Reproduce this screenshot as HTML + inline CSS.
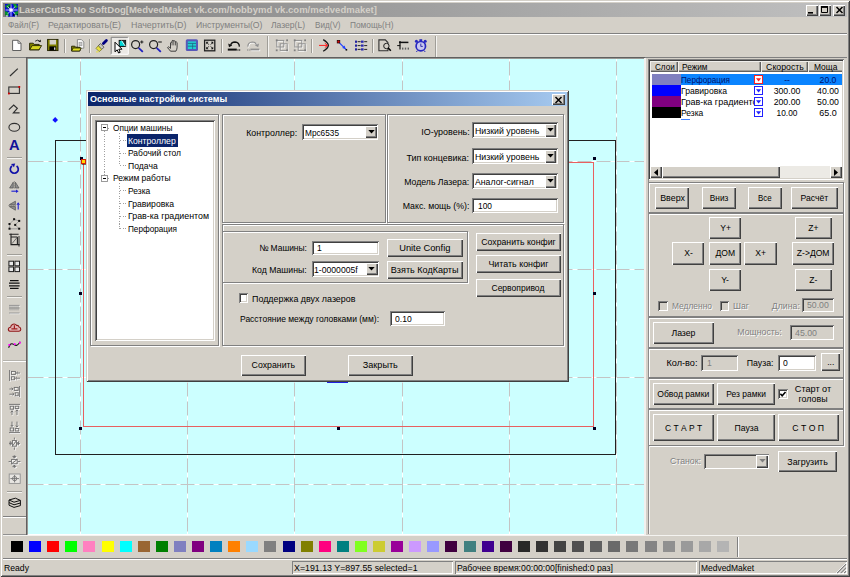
<!DOCTYPE html>
<html lang="ru"><head><meta charset="utf-8"><title>LaserCut53</title>
<style>
html,body{margin:0;padding:0;background:#d4d0c8;overflow:hidden;}
body{width:850px;height:577px;overflow:hidden;}
#app{position:relative;width:850px;height:577px;overflow:hidden;background:#d4d0c8;font-family:"Liberation Sans",sans-serif;font-size:9px;color:#000;}
#app div{position:absolute;box-sizing:border-box;}
.t{line-height:12px;height:12px;white-space:nowrap;transform-origin:0 50%;}
.t.r{transform-origin:100% 50%;}
.t.c{width:200px;text-align:center;transform-origin:50% 50%;}
.s{display:inline-block;transform-origin:50% 50%;line-height:12px;}
.ed .s{transform-origin:0 50%;}
.g{color:#808080;text-shadow:0.8px 0.8px 0 #fff;}
.b{font-weight:bold;}
.btn{background:#d4d0c8;box-shadow:inset 1px 1px 0 #fff,inset -1px -1px 0 #404040,inset -2px -2px 0 #808080;display:flex;align-items:center;justify-content:center;white-space:nowrap;}
.ed{padding-top:0.8px;background:#fff;box-shadow:inset 1px 1px 0 #808080,inset -1px -1px 0 #fff,inset 2px 2px 0 #404040,inset -2px -2px 0 #d4d0c8;display:flex;align-items:center;padding-left:4px;white-space:nowrap;}
.ed.cmb{padding-top:1.8px;padding-left:2.6px;}
.ed.dis{background:#d4d0c8;color:#808080;}
.cbtn{background:#d4d0c8;box-shadow:inset 1px 1px 0 #fff,inset -1px -1px 0 #404040,inset -2px -2px 0 #808080;display:flex;align-items:center;justify-content:center;}
.fr{border:1px solid #808080;box-shadow:inset 1px 1px 0 #fff,1px 1px 0 #fff;}
.sunk{box-shadow:inset 1px 1px 0 #808080,inset -1px -1px 0 #fff,inset 2px 2px 0 #404040,inset -2px -2px 0 #d4d0c8;}
.cb{background:#fff;box-shadow:inset 1px 1px 0 #808080,inset -1px -1px 0 #fff,inset 2px 2px 0 #404040,inset -2px -2px 0 #d4d0c8;}
.cb.dis{background:#d4d0c8;}
.hl{background:#808080;height:1px;}
.wl{background:#fff;height:1px;}
.sw{width:12px;height:11px;top:541px;}
svg{position:absolute;overflow:visible;}
.cbtn svg{position:static;}

</style></head>
<body>
<div id="app">
<div class="" style="left:0px;top:0px;width:850px;height:577px;background:#d4d0c8;box-shadow:inset 1px 1px 0 #d4d0c8,inset -1px -1px 0 #404040,inset 2px 2px 0 #fff,inset -2px -2px 0 #808080;"></div>
<div class="" style="left:3px;top:3px;width:844px;height:14px;background:linear-gradient(90deg,#808080 0%,#c0c0c0 100%);"></div>
<svg style="left:4.5px;top:3.8px" width="13" height="13" viewBox="0 0 13 13"><rect width="13" height="12.6" fill="#0808d8"/><path d="M0 2l4-2h2l-3 5zM8 0h3l2 3l-3 2zM0 7l3 1l1 4h-4zM9 8l4-1v3l-3 2z" fill="#089030"/><path d="M0 12.6v-2l2 2zM13 12.600v-2.500l-2.500 2.500zM6 2l-2 2l1-3zM8 10l2 1l-2 1z" fill="#000"/><path d="M6 0.400v12M0.600 6h12M2.400 2.400l8 7.600M10.400 2.400l-8 7.600" stroke="#e8e8ff" stroke-width="0.8"/><circle cx="6" cy="6" r="1.800" fill="#fff"/><rect x="0.400" y="11.400" width="2.400" height="1.200" fill="#fff"/><rect x="10" y="11.400" width="2.600" height="1.200" fill="#fff"/></svg>
<div class="t  b" style="left:18.6px;top:4px;transform:scaleX(1.057);color:#d4d0c8;">LaserCut53 No SoftDog[MedvedMaket vk.com/hobbymd vk.com/medvedmaket]</div>
<div class="btn " style="left:806px;top:5px;width:11.5px;height:10.5px;"><svg width="6" height="2" viewBox="0 0 6 2" style="position:static;margin:5px 2px 0 0"><rect width="5" height="1.6" fill="#000"/></svg></div>
<div class="btn " style="left:818.5px;top:5px;width:12px;height:10.5px;"><svg width="7" height="7" viewBox="0 0 7 7" style="position:static;margin:0 1px 1px 0"><path d="M0.500 1v5.500h6V1z" fill="none" stroke="#000" stroke-width="1"/><rect x="0" y="0" width="7" height="1.800" fill="#000"/></svg></div>
<div class="btn " style="left:833px;top:5px;width:12px;height:10.5px;"><svg width="7" height="6" viewBox="0 0 7 6" style="position:static"><path d="M0.5 0l6 6M6.5 0l-6 6" stroke="#000" stroke-width="1.5" fill="none"/></svg></div>
<div class="t " style="left:8px;top:19.2px;transform:scaleX(0.922);color:#808080;">Файл(F)</div>
<div class="t " style="left:48px;top:19.2px;transform:scaleX(0.984);color:#808080;">Редактировать(E)</div>
<div class="t " style="left:130.5px;top:19.2px;transform:scaleX(0.986);color:#808080;">Начертить(D)</div>
<div class="t " style="left:195.5px;top:19.2px;transform:scaleX(0.962);color:#808080;">Инструменты(O)</div>
<div class="t " style="left:271px;top:19.2px;transform:scaleX(0.948);color:#808080;">Лазер(L)</div>
<div class="t " style="left:314.5px;top:19.2px;transform:scaleX(0.902);color:#808080;">Вид(V)</div>
<div class="t " style="left:349.5px;top:19.2px;transform:scaleX(0.921);color:#808080;">Помощь(H)</div>
<div class="" style="left:3px;top:33px;width:844px;height:1px;background:#808080;"></div>
<div class="" style="left:3px;top:34px;width:844px;height:1px;background:#fff;"></div>
<div class="" style="left:3px;top:57px;width:844px;height:1px;background:#808080;"></div>
<div class="" style="left:266.5px;top:36px;width:1px;height:21px;background:#a09e98;"></div>
<div class="" style="left:267.5px;top:36px;width:1px;height:21px;background:#f4f3f0;"></div>
<div class="" style="left:435px;top:36px;width:1px;height:21px;background:#a09e98;"></div>
<div class="" style="left:436px;top:36px;width:1px;height:21px;background:#f4f3f0;"></div>
<div class="" style="left:63.5px;top:39px;width:1px;height:14px;background:#9c9a94;"></div>
<div class="" style="left:64.5px;top:39px;width:1px;height:14px;background:#f4f3f0;"></div>
<div class="" style="left:88.5px;top:39px;width:1px;height:14px;background:#9c9a94;"></div>
<div class="" style="left:89.5px;top:39px;width:1px;height:14px;background:#f4f3f0;"></div>
<div class="" style="left:220.5px;top:39px;width:1px;height:14px;background:#9c9a94;"></div>
<div class="" style="left:221.5px;top:39px;width:1px;height:14px;background:#f4f3f0;"></div>
<div class="" style="left:311px;top:39px;width:1px;height:14px;background:#9c9a94;"></div>
<div class="" style="left:312px;top:39px;width:1px;height:14px;background:#f4f3f0;"></div>
<div class="" style="left:372px;top:39px;width:1px;height:14px;background:#9c9a94;"></div>
<div class="" style="left:373px;top:39px;width:1px;height:14px;background:#f4f3f0;"></div>
<svg style="left:0;top:0;pointer-events:none" width="850" height="577" viewBox="0 0 850 577"><path d="M12.6 40.3h5.4l3 3v7.2h-8.4z" fill="#fff" stroke="#606060" stroke-width="1"/><path d="M18 40.3v3h3" fill="none" stroke="#606060" stroke-width="0.9"/><path d="M29.6 43.2h3.6l1 1.2h5v5.4h-9.6z" fill="#808000" stroke="#202000" stroke-width="0.9"/><path d="M29.6 49.8l2.6-4.2h9.4l-2.6 4.2z" fill="#d6d620" stroke="#202000" stroke-width="0.9"/><path d="M35.2 41.2q2.6-2.4 5 .4" fill="none" stroke="#202020" stroke-width="0.9"/><path d="M40.8 39.4v2.6h-2.6z" fill="#202020"/><rect x="47.6" y="39.4" width="10.4" height="11.2" fill="#808000" stroke="#202000" stroke-width="0.9"/><rect x="49.6" y="39.9" width="6.4" height="4.6" fill="#d4d0c8"/><rect x="49.4" y="46.4" width="6.8" height="4.2" fill="#000"/><rect x="54" y="47.4" width="1.4" height="2.4" fill="#d4d0c8"/><path d="M77.4 39.6h4l2.4 2.4v6.2h-6.4z" fill="#fff" stroke="#808080" stroke-width="0.9"/><rect x="79" y="42.2" width="3" height="3.6" fill="#c8c8c8" stroke="#909090" stroke-width="0.6"/><path d="M71.6 46.2h3.2l1 1h4.2v3.8h-8.4z" fill="#808000" stroke="#202000" stroke-width="0.9"/><path d="M71.6 51l1.6-3h8l-1.6 3z" fill="#dede20" stroke="#202000" stroke-width="0.8"/><path d="M103.4 43.6l3-3" stroke="#000080" stroke-width="2.8" stroke-linecap="round"/><path d="M100.4 43.6l3.6 3.6-2.2 2.2-3.6-3.6z" fill="#c8c8c0" stroke="#404040" stroke-width="0.8"/><path d="M98.2 45.8l3.6 3.6-2.6 2.2-3.2-3.2z" fill="#e8e040" stroke="#707020" stroke-width="0.7"/><rect x="96" y="51.4" width="2.6" height="1" fill="#e8e040"/><rect x="111.2" y="37.3" width="17.1" height="17" fill="#ebe9e5"/><path d="M111.2 54.3v-17h17.1" fill="none" stroke="#808080" stroke-width="1"/><path d="M128.3 37.3v17h-17.1" fill="none" stroke="#fff" stroke-width="1"/><rect x="119.2" y="40.4" width="6.4" height="6" fill="#00d8d8" stroke="#101010" stroke-width="1"/><path d="M121.6 40.6l3.8 5.6" stroke="#fff" stroke-width="0.9"/><path d="M122.4 40.6h3v5z" fill="#303030"/><path d="M115 42.2v9.600l2.200-2 1.400 3.200 1.600-0.700-1.400-3.100h3.200z" fill="#fff" stroke="#000" stroke-width="1"/><circle cx="135.6" cy="44.6" r="4" fill="none" stroke="#202020" stroke-width="1.2"/><path d="M138.6 47.8l4.2 4" stroke="#2020c0" stroke-width="1.8"/><circle cx="153.6" cy="44.6" r="4" fill="none" stroke="#202020" stroke-width="1.2"/><path d="M156.6 47.8l4.2 4" stroke="#2020c0" stroke-width="1.8"/><path d="M140.2 42h3.2M141.8 40.4v3.2" stroke="#202020" stroke-width="1.1"/><path d="M158.2 42h3.6" stroke="#202020" stroke-width="1.1"/><path d="M170.5 51.2q-1.8-2.4-3-3.6q0.6-1.6 2.2 0l0.8 0.8v-5.6q0.9-1.2 1.6 0v-2q0.9-1.2 1.7 0v0.6q0.9-1.2 1.7 0v1q0.9-1 1.6 0.2v4.6q0 2-1.2 4z" fill="#d4d0c8" stroke="#303030" stroke-width="0.9" stroke-linejoin="round"/><path d="M172.1 42.8v2.6M173.8 41.4v4M175.5 42.4v3" stroke="#303030" stroke-width="0.7"/><rect x="185.8" y="39.2" width="12.2" height="11.8" rx="1.6" fill="#5858b8"/><rect x="187.8" y="41.4" width="8.2" height="7.6" fill="#20d0d0"/><path d="M187.8 43.4h8.2M187.8 46.2h8.2" stroke="#206080" stroke-width="0.8"/><path d="M192.6 43.4v5.6" stroke="#206080" stroke-width="0.7"/><rect x="204.6" y="40.2" width="10.2" height="10.6" fill="#d4d0c8" stroke="#202020" stroke-width="1.3"/><path d="M206.2 41.8h2.4l-2.4 2.4zM213.2 41.8v2.4l-2.4-2.4zM206.2 49.2v-2.4l2.4 2.4zM213.2 49.2h-2.4l2.4-2.4z" fill="#101010"/><path d="M207 42.8l5.4 5.4M212.4 42.8l-5.4 5.4" stroke="#101010" stroke-width="0.8"/><rect x="208.6" y="44.4" width="2.2" height="2.2" fill="#d4d0c8"/><path d="M230.6 45.6q0.6-3.6 4.4-3.6q4.2 0.2 4.4 4.6" fill="none" stroke="#101010" stroke-width="1.3"/><path d="M228.2 43.4l0.8 3.8l3.2-1.6z" fill="#101010"/><rect x="227.8" y="48.6" width="9" height="2" fill="#101010"/><rect x="237.4" y="49.4" width="1.1" height="1.2" fill="#101010"/><rect x="239.1" y="49.4" width="1.1" height="1.2" fill="#101010"/><g transform="translate(0.8,0.8)"><path d="M256.6 45.600q-0.600-3.600-4.400-3.600q-4.200 0.200-4.400 4.600" fill="none" stroke="#fff" stroke-width="1.1"/><rect x="250.400" y="48.600" width="9" height="1.800" fill="#fff"/></g><path d="M256.600 45.600q-0.600-3.600-4.400-3.600q-4.200 0.200-4.400 4.600" fill="none" stroke="#909090" stroke-width="1.2"/><path d="M259 43.400l-0.800 3.800l-3.200-1.600z" fill="#909090"/><rect x="250.400" y="48.600" width="9" height="1.800" fill="#909090"/><rect x="247" y="49.400" width="1.100" height="1.200" fill="#909090"/><rect x="248.700" y="49.400" width="1.100" height="1.200" fill="#909090"/><g transform="translate(275.8,39.4)"><g transform="translate(0.8,0.8)" stroke="#fff" fill="none" stroke-width="0.9"><rect x="1" y="1" width="7" height="6.6"/><rect x="4.4" y="4.4" width="7" height="6.6"/></g><g stroke="#909090" fill="none" stroke-width="1"><rect x="1" y="1" width="7" height="6.6"/><rect x="4.4" y="4.4" width="7" height="6.6"/></g><g fill="#808080"><rect x="0" y="0" width="1.8" height="1.8"/><rect x="10.4" y="0" width="1.8" height="1.8"/><rect x="0" y="10" width="1.8" height="1.8"/><rect x="10.4" y="10" width="1.8" height="1.8"/></g></g><g transform="translate(293.8,39.4)"><g transform="translate(0.8,0.8)" stroke="#fff" fill="none" stroke-width="0.9"><rect x="1" y="1" width="7" height="6.6"/><rect x="4.4" y="4.4" width="7" height="6.6"/></g><g stroke="#909090" fill="none" stroke-width="1"><rect x="1" y="1" width="7" height="6.6"/><rect x="4.4" y="4.4" width="7" height="6.6"/></g><g fill="#808080"><rect x="0" y="0" width="1.8" height="1.8"/><rect x="10.4" y="0" width="1.8" height="1.8"/><rect x="0" y="10" width="1.8" height="1.8"/><rect x="10.4" y="10" width="1.8" height="1.8"/></g></g><path d="M323.2 39.6q5 3 5.2 5.8q-0.2 2.8-5.2 5.8" fill="none" stroke="#181818" stroke-width="1.3"/><path d="M319 45.4h8.4M324.8 43.2l2.8 2.2l-2.8 2.2" fill="none" stroke="#ff2020" stroke-width="1"/><path d="M339.4 42.8l6.6 6.6" stroke="#2040ff" stroke-width="1.2"/><path d="M345.6 49l-3.4-1l2.4-2.4z" fill="#2040ff"/><rect x="337.2" y="40.4" width="2.6" height="2.6" fill="#e00000" stroke="#200000" stroke-width="0.7"/><rect x="345.6" y="49" width="1.6" height="1.6" fill="#101010"/><rect x="355" y="40.6" width="2" height="2.2" fill="#2020a0"/><path d="M357.6 41.7h3M364.2 41.7h3" stroke="#101010" stroke-width="0.9"/><rect x="361" y="40.6" width="2.6" height="2.2" fill="#2828b0"/><rect x="355" y="44.5" width="2" height="2.2" fill="#2020a0"/><path d="M357.6 45.6h3M364.2 45.6h3" stroke="#101010" stroke-width="0.9"/><rect x="361" y="44.5" width="2.6" height="2.2" fill="#2828b0"/><rect x="355" y="48.3" width="2" height="2.2" fill="#2020a0"/><path d="M357.6 49.4h3M364.2 49.4h3" stroke="#101010" stroke-width="0.9"/><rect x="361" y="48.3" width="2.6" height="2.2" fill="#2828b0"/><path d="M378.9 39.9h6.4l2.6 2.6v8.3h-9z" fill="none" stroke="#303030" stroke-width="1.1"/><circle cx="386.4" cy="46" r="2.7" fill="#d4d0c8" stroke="#202020" stroke-width="1"/><path d="M388.2 48l2.6 2.8" stroke="#000" stroke-width="1.6"/><path d="M399 42.4h9.4" stroke="#101010" stroke-width="1.5"/><path d="M400 41v8.6" stroke="#101010" stroke-width="1.2"/><path d="M397.2 45.6h3" stroke="#101010" stroke-width="1"/><rect x="402" y="47.6" width="1.4" height="2" fill="#606060"/><rect x="404.8" y="47.6" width="1.4" height="2" fill="#606060"/><rect x="407.6" y="47.6" width="1.4" height="2" fill="#606060"/><circle cx="420.8" cy="46.2" r="4.7" fill="#c8c8f0" stroke="#2828c0" stroke-width="1.7"/><circle cx="416.4" cy="41.2" r="1.5" fill="#2828c0"/><circle cx="425.2" cy="41.2" r="1.5" fill="#2828c0"/><rect x="419.4" y="39.2" width="2.8" height="1.8" fill="#2828c0"/><path d="M420.8 43.6v2.8h2" fill="none" stroke="#2020a0" stroke-width="0.9"/><path d="M417.4 50.6l-1 1.4M424.2 50.6l1 1.4" stroke="#2828c0" stroke-width="1"/></svg>
<div class="" style="left:7px;top:157.2px;width:15px;height:1px;background:#a09e98;"></div>
<div class="" style="left:7px;top:158.2px;width:15px;height:1px;background:#f4f3f0;"></div>
<div class="" style="left:7px;top:254.3px;width:15px;height:1px;background:#a09e98;"></div>
<div class="" style="left:7px;top:255.3px;width:15px;height:1px;background:#f4f3f0;"></div>
<div class="" style="left:7px;top:296px;width:15px;height:1px;background:#a09e98;"></div>
<div class="" style="left:7px;top:297px;width:15px;height:1px;background:#f4f3f0;"></div>
<div class="" style="left:7px;top:490.5px;width:15px;height:1px;background:#a09e98;"></div>
<div class="" style="left:7px;top:491.5px;width:15px;height:1px;background:#f4f3f0;"></div>
<div class="" style="left:3px;top:359.5px;width:23px;height:1px;background:#b4b2ac;"></div>
<div class="" style="left:3px;top:360.5px;width:23px;height:1px;background:#fff;"></div>
<div class="" style="left:3px;top:516px;width:23px;height:1px;background:#808080;"></div>
<div class="" style="left:3px;top:517px;width:23px;height:1px;background:#fff;"></div>
<div class="" style="left:3px;top:533.5px;width:23px;height:1px;background:#909090;"></div>
<svg style="left:0;top:0;pointer-events:none" width="850" height="577" viewBox="0 0 850 577"><path d="M10 76L17.8 68.6" stroke="#303030" stroke-width="1.2"/><rect x="8.8" y="87" width="10.6" height="6.4" fill="none" stroke="#303030" stroke-width="1.1"/><rect x="18.4" y="86" width="1.8" height="1.8" fill="#d00000"/><rect x="8" y="92.6" width="1.8" height="1.8" fill="#d00000"/><path d="M8.9 109.6L13.7 105.1L17.3 108.4L13.4 112.8H19.6" fill="none" stroke="#303030" stroke-width="1.2"/><ellipse cx="14.3" cy="127.3" rx="5.4" ry="3.9" fill="none" stroke="#303030" stroke-width="1.1"/><text x="14.4" y="149.8" text-anchor="middle" font-family="Liberation Sans, sans-serif" font-weight="bold" font-size="14" fill="#101098" transform="translate(14.4 0) scale(1.05 1) translate(-14.4 0)">A</text><path d="M16.6 166a4 4 0 1 1-4.6 0" fill="none" stroke="#1010a8" stroke-width="1.7"/><path d="M11 164l4.2-0.6l-1.2 3.8z" fill="#1010a8"/><path d="M13.2 182.2v5.8h-3.6zM15.4 182.2v5.8h3.6z" fill="#909090" stroke="#505050" stroke-width="0.7"/><path d="M14.3 181.4v7.4" stroke="#303030" stroke-width="0.7" stroke-dasharray="1 1"/><path d="M11.4 191.2h5" stroke="#2020d0" stroke-width="1.1"/><path d="M16 189.4l2.6 1.8l-2.6 1.8z" fill="#2020d0"/><path d="M9.4 204.6h6v-3.4zM9.4 206.6h6v3.6z" fill="#909090" stroke="#505050" stroke-width="0.7"/><path d="M8.6 205.6h7.6" stroke="#303030" stroke-width="0.7" stroke-dasharray="1 1"/><path d="M18.2 209.6v-5" stroke="#2020d0" stroke-width="1.1"/><path d="M16.4 204.8l1.8-2.6l1.8 2.6z" fill="#2020d0"/><path d="M9.6 224l4.6-4.6l5 1.6l-4 3.8l4 4h-9.6z" fill="none" stroke="#909090" stroke-width="0.8"/><g fill="#101010"><rect x="13.1" y="218.2" width="2" height="2"/><rect x="8.5" y="223" width="2" height="2"/><rect x="18.2" y="219.900" width="2" height="2"/><rect x="8.5" y="227.700" width="2" height="2"/><rect x="18.200" y="227.700" width="2" height="2"/><rect x="14.200" y="223.900" width="2" height="2"/></g><path d="M9.2 234.2h9.4M11 233.4v11.2h8.6M17.4 237v7.4M11 237h6.4" fill="none" stroke="#202020" stroke-width="1.1"/><path d="M19 236v10.6" stroke="#202020" stroke-width="0.9"/><path d="M12 243.6l5-6" stroke="#404040" stroke-width="0.7"/><rect x="8.9" y="261.2" width="4.6" height="4.6" fill="#e8e8e8" stroke="#202020" stroke-width="1"/><rect x="14.9" y="261.2" width="4.6" height="4.6" fill="#e8e8e8" stroke="#202020" stroke-width="1"/><rect x="8.9" y="267" width="4.6" height="4.6" fill="#e8e8e8" stroke="#202020" stroke-width="1"/><rect x="14.9" y="267" width="4.6" height="4.6" fill="#e8e8e8" stroke="#202020" stroke-width="1"/><path d="M10 280.6h8.6M9 283.2h10.6M9 285.8h10.6M10 288.4h8.6" stroke="#101010" stroke-width="1.2"/><g transform="translate(0.7,0.7)"><path d="M9 305.4h10.6M9 313h10.6" stroke="#fff" stroke-width="0.9"/></g><path d="M9 305.4h10.6M9 308h10.6M9 313h10.6" stroke="#909090" stroke-width="0.9"/><path d="M10 305.4v5M12 305.4v5M14 305.4v5M16 305.4v5M18 305.4v5" stroke="#909090" stroke-width="0.8"/><g transform="translate(0,4.6)"><path d="M10 326.6q-2-0.4-1.6-2.400q0.400-1.600 2.200-1.600q0.200-2.200 2.400-3q2.400-0.600 3.600 1.200q2-0.200 2.400 1.600q1.800 0.400 1.800 2.200q0 1.800-1.800 2z" fill="#e0b4b4" stroke="#901818" stroke-width="1.1"/><path d="M14.400 320.600v3.400M11.400 324.200h6" stroke="#a02020" stroke-width="1.200"/></g><g transform="translate(0,4.8)"><path d="M8.6 343q2-5.800 5-3.400q3.400 2.800 6.600-2.600" fill="none" stroke="#101010" stroke-width="1.1"/><rect x="8.4" y="339.200" width="1.800" height="1.800" fill="#ff00ff"/><rect x="13.800" y="338.400" width="1.800" height="1.800" fill="#ff00ff"/><rect x="19" y="337" width="1.800" height="1.800" fill="#ff00ff"/></g><g transform="translate(0.8,0.8)" fill="none" stroke="#fff" stroke-width="0.9"><path d="M9.6 370v11"/><rect x="11.4" y="371.4" width="4" height="3"/><rect x="11.4" y="376.800" width="3" height="3"/><path d="M20 373h-3.400M20 378.200h-4"/><path d="M17.800 371.800l-1.400 1.200l1.400 1.200M16.800 377l-1.400 1.200l1.400 1.200"/></g><g fill="none" stroke="#6c6c6c" stroke-width="0.9"><path d="M9.6 370v11"/><rect x="11.4" y="371.4" width="4" height="3"/><rect x="11.4" y="376.800" width="3" height="3"/><path d="M20 373h-3.400M20 378.200h-4"/><path d="M17.800 371.800l-1.400 1.200l1.400 1.200M16.800 377l-1.400 1.200l1.400 1.200"/></g><g transform="translate(0.8,0.8)" fill="none" stroke="#fff" stroke-width="0.9"><path d="M19.600 386v11"/><rect x="14.200" y="387.400" width="4" height="3"/><rect x="15.200" y="392.800" width="3" height="3"/><path d="M9.400 389h3.600M9.400 394.200h4.600"/><path d="M11.600 387.800l1.400 1.200l-1.400 1.200M12.600 393l1.400 1.200l-1.400 1.200"/></g><g fill="none" stroke="#6c6c6c" stroke-width="0.9"><path d="M19.600 386v11"/><rect x="14.200" y="387.400" width="4" height="3"/><rect x="15.200" y="392.800" width="3" height="3"/><path d="M9.400 389h3.600M9.400 394.200h4.600"/><path d="M11.600 387.800l1.400 1.200l-1.400 1.200M12.600 393l1.400 1.200l-1.400 1.200"/></g><g transform="translate(0.8,0.8)" fill="none" stroke="#fff" stroke-width="0.9"><path d="M9 404.400h11"/><rect x="10.200" y="406.200" width="3.400" height="3"/><rect x="15.200" y="406.200" width="3.600" height="2.400"/><path d="M12 415v-4.600M17 415v-5.400"/><path d="M10.800 412.400l1.200-1.400l1.200 1.400M15.800 411.400l1.200-1.400l1.200 1.400"/></g><g fill="none" stroke="#6c6c6c" stroke-width="0.9"><path d="M9 404.400h11"/><rect x="10.200" y="406.200" width="3.400" height="3"/><rect x="15.200" y="406.200" width="3.600" height="2.400"/><path d="M12 415v-4.600M17 415v-5.400"/><path d="M10.800 412.400l1.200-1.400l1.200 1.400M15.800 411.400l1.200-1.400l1.200 1.400"/></g><g transform="translate(0.8,0.8)" fill="none" stroke="#fff" stroke-width="0.9"><path d="M9 432.600h11"/><rect x="10.200" y="428" width="3.400" height="3"/><rect x="15.200" y="428.600" width="3.600" height="2.400"/><path d="M12 421.600v5M17 421.600v5.600"/><path d="M10.800 425l1.200 1.400l1.200-1.400M15.800 425.600l1.200 1.400l1.200-1.400"/></g><g fill="none" stroke="#6c6c6c" stroke-width="0.9"><path d="M9 432.600h11"/><rect x="10.200" y="428" width="3.400" height="3"/><rect x="15.200" y="428.600" width="3.600" height="2.400"/><path d="M12 421.600v5M17 421.600v5.600"/><path d="M10.800 425l1.200 1.400l1.200-1.400M15.800 425.600l1.200 1.400l1.200-1.400"/></g><g transform="translate(0.8,0.8)" fill="none" stroke="#fff" stroke-width="0.9"><rect x="12.4" y="440.6" width="4" height="5.6"/><path d="M14.400 437.600v2M14.400 447.400v2.400"/><path d="M9 443.400h2.600M17.200 443.400h2.800"/><path d="M10.200 441.600l1.800 1.800l-1.800 1.800zM18.600 441.600l-1.800 1.800l1.800 1.800z"/><path d="M12.400 446.200l4-5.600"/></g><g fill="none" stroke="#6c6c6c" stroke-width="0.9"><rect x="12.4" y="440.6" width="4" height="5.6"/><path d="M14.400 437.600v2M14.400 447.400v2.400"/><path d="M9 443.400h2.600M17.200 443.400h2.800"/><path d="M10.200 441.600l1.800 1.800l-1.800 1.800zM18.600 441.600l-1.800 1.800l1.800 1.800z"/><path d="M12.400 446.200l4-5.600"/></g><g transform="translate(0.8,0.8)" fill="none" stroke="#fff" stroke-width="0.9"><rect x="11.600" y="459.400" width="5.600" height="4.400"/><path d="M8.600 461.600h2.400M17.800 461.600h2.600"/><path d="M14.400 455.400v2.400M14.400 465v2.800"/><path d="M12.800 456.400l1.600 1.800l1.600-1.800zM12.800 466.800l1.600-1.800l1.600 1.800z"/><path d="M11.600 463.800l5.600-4.400"/></g><g fill="none" stroke="#6c6c6c" stroke-width="0.9"><rect x="11.600" y="459.400" width="5.600" height="4.400"/><path d="M8.600 461.600h2.400M17.800 461.600h2.600"/><path d="M14.400 455.400v2.400M14.400 465v2.800"/><path d="M12.800 456.400l1.600 1.800l1.600-1.800zM12.800 466.800l1.600-1.800l1.600 1.800z"/><path d="M11.600 463.800l5.600-4.400"/></g><rect x="9.200" y="474" width="11" height="9.400" fill="#e8e6e2" stroke="#909090" stroke-width="0.9"/><path d="M10.400 478.600h8.600M14.600 475v7.400" stroke="#707070" stroke-width="0.9"/><circle cx="14.600" cy="478.600" r="2.200" fill="none" stroke="#707070" stroke-width="0.8"/><path d="M9 500l6.400-1.800l5 2.200l-6.400 1.800z" fill="#d4d0c8" stroke="#101010" stroke-width="1"/><path d="M9 502.600l5 2.200l6.400-1.800M9 505.200l5 2.200l6.400-1.800M9 500v5.200M20.400 500.400v5.200" fill="none" stroke="#101010" stroke-width="1"/></svg>
<div class="" style="left:26px;top:57px;width:619px;height:478px;background:#d4d0c8;box-shadow:inset 1.5px 1.5px 0 #606060,inset -1px -1px 0 #fff;"><div style="left:1.5px;top:1.5px;right:1px;bottom:1px;background:#ccffff;overflow:hidden;"><div style="left:0;right:0;top:102.5px;height:1px;background:repeating-linear-gradient(90deg,#c4c4c4 0,#c4c4c4 14.2px,#fff 14.2px,#fff 18.9px);background-position:1.5px 0;"></div><div style="left:0;right:0;top:210.5px;height:1px;background:repeating-linear-gradient(90deg,#c4c4c4 0,#c4c4c4 14.2px,#fff 14.2px,#fff 18.9px);background-position:1.5px 0;"></div><div style="left:0;right:0;top:318.5px;height:1px;background:repeating-linear-gradient(90deg,#c4c4c4 0,#c4c4c4 14.2px,#fff 14.2px,#fff 18.9px);background-position:1.5px 0;"></div><div style="left:0;right:0;top:425.5px;height:1px;background:repeating-linear-gradient(90deg,#c4c4c4 0,#c4c4c4 14.2px,#fff 14.2px,#fff 18.9px);background-position:1.5px 0;"></div><div style="top:0;bottom:0;left:52.5px;width:1px;background:repeating-linear-gradient(180deg,#c4c4c4 0,#c4c4c4 14.2px,#fff 14.2px,#fff 18.9px);background-position:0 -54.5px;"></div><div style="top:0;bottom:0;left:159.7px;width:1px;background:repeating-linear-gradient(180deg,#c4c4c4 0,#c4c4c4 14.2px,#fff 14.2px,#fff 18.9px);background-position:0 -54.5px;"></div><div style="top:0;bottom:0;left:266.9px;width:1px;background:repeating-linear-gradient(180deg,#c4c4c4 0,#c4c4c4 14.2px,#fff 14.2px,#fff 18.9px);background-position:0 -54.5px;"></div><div style="top:0;bottom:0;left:374.1px;width:1px;background:repeating-linear-gradient(180deg,#c4c4c4 0,#c4c4c4 14.2px,#fff 14.2px,#fff 18.9px);background-position:0 -54.5px;"></div><div style="top:0;bottom:0;left:481.3px;width:1px;background:repeating-linear-gradient(180deg,#c4c4c4 0,#c4c4c4 14.2px,#fff 14.2px,#fff 18.9px);background-position:0 -54.5px;"></div><div style="top:0;bottom:0;left:588.5px;width:1px;background:repeating-linear-gradient(180deg,#c4c4c4 0,#c4c4c4 14.2px,#fff 14.2px,#fff 18.9px);background-position:0 -54.5px;"></div><div style="left:27.5px;top:81.5px;width:561.2px;height:314.6px;border:1px solid #202020;"></div><div style="left:55.1px;top:103.1px;width:511px;height:265.7px;border:1.2px solid #e86060;"></div><div style="left:52px;top:98px;width:3px;height:3px;background:#000020;"></div><div style="left:565.8px;top:98px;width:3px;height:3px;background:#000020;"></div><div style="left:51.6px;top:233.2px;width:3px;height:3px;background:#000020;"></div><div style="left:565.8px;top:233.2px;width:3px;height:3px;background:#000020;"></div><div style="left:51.6px;top:368px;width:3px;height:3px;background:#000020;"></div><div style="left:309px;top:368px;width:3px;height:3px;background:#000020;"></div><div style="left:565.8px;top:368px;width:3px;height:3px;background:#000020;"></div><div style="left:309px;top:98px;width:3px;height:3px;background:#000020;"></div><div style="left:53px;top:100px;width:5px;height:5px;background:#ffd800;border:1px solid #d82000;box-shadow:0.6px 0.6px 0 #301000;"></div><div style="left:25.3px;top:59.9px;width:4.4px;height:4.4px;background:#1010ff;transform:rotate(45deg);"></div><div style="left:299.9px;top:322.5px;width:21px;height:1.6px;background:#2020e0;"></div></div></div>
<div class="ed" style="left:648px;top:59px;width:195.5px;height:121px;padding:0;"></div>
<div class="" style="left:650px;top:61px;width:27.7px;height:11px;background:#d4d0c8;box-shadow:inset 1px 1px 0 #f0efec,inset -1px -1px 0 #606060,inset -2px -2px 0 #a09e98;overflow:hidden;"></div>
<div class="t " style="left:654.5px;top:60.5px;transform:scaleX(0.900);">Слои</div>
<div class="" style="left:677.7px;top:61px;width:83.6px;height:11px;background:#d4d0c8;box-shadow:inset 1px 1px 0 #f0efec,inset -1px -1px 0 #606060,inset -2px -2px 0 #a09e98;overflow:hidden;"></div>
<div class="t " style="left:682.2px;top:60.5px;transform:scaleX(0.919);">Режим</div>
<div class="" style="left:761.3px;top:61px;width:46.7px;height:11px;background:#d4d0c8;box-shadow:inset 1px 1px 0 #f0efec,inset -1px -1px 0 #606060,inset -2px -2px 0 #a09e98;overflow:hidden;"></div>
<div class="t c " style="left:684.6px;top:60.5px;transform:scaleX(0.973);">Скорость</div>
<div class="" style="left:808px;top:61px;width:34px;height:11px;background:#d4d0c8;box-shadow:inset 1px 1px 0 #f0efec,inset 0 -1px 0 #606060,inset 0 -2px 0 #a09e98;overflow:hidden;"></div>
<div class="t " style="left:813.5px;top:60.5px;transform:scaleX(0.935);">Моща</div>
<div class="" style="left:680.5px;top:74px;width:161px;height:11.05px;background:#0a84ff;"></div>
<div class="" style="left:651.8px;top:74px;width:28.8px;height:11.05px;background:#8080c0;"></div>
<div class="t " style="left:681px;top:73.53px;transform:scaleX(0.908);color:#00106a;">Перфорация</div>
<div class="" style="left:754.2px;top:75.2px;width:9.2px;height:8.85px;background:#fff;border:1px solid #ff2020;"><svg width="9.2" height="8.8" viewBox="0 0 9.2 8.8" style="left:-1px;top:-1px"><path d="M2 3.2h5.2L4.6 6.4z" fill="#ff2020"/></svg></div>
<div class="t c " style="left:687px;top:73.53px;transform:scaleX(0.950);color:#00106a;">--</div>
<div class="t c " style="left:727.8px;top:73.53px;transform:scaleX(0.959);color:#00106a;">20.0</div>
<div class="" style="left:651.8px;top:85.05px;width:28.8px;height:11.05px;background:#0000ff;"></div>
<div class="t " style="left:681px;top:84.57px;transform:scaleX(0.956);">Гравировка</div>
<div class="" style="left:754.2px;top:86.25px;width:9.2px;height:8.85px;background:#fff;border:1px solid #2020ff;"><svg width="9.2" height="8.8" viewBox="0 0 9.2 8.8" style="left:-1px;top:-1px"><path d="M2 3.2h5.2L4.6 6.4z" fill="#2020ff"/></svg></div>
<div class="t c " style="left:687px;top:84.57px;transform:scaleX(0.970);">300.00</div>
<div class="t c " style="left:727.8px;top:84.57px;transform:scaleX(0.968);">40.00</div>
<div class="" style="left:651.8px;top:96.1px;width:28.8px;height:11.05px;background:#800080;"></div>
<div class="t " style="left:681px;top:95.62px;transform:scaleX(1.002);">Грав-ка градиенто</div>
<div class="" style="left:754.2px;top:97.3px;width:9.2px;height:8.85px;background:#fff;border:1px solid #2020ff;"><svg width="9.2" height="8.8" viewBox="0 0 9.2 8.8" style="left:-1px;top:-1px"><path d="M2 3.2h5.2L4.6 6.4z" fill="#2020ff"/></svg></div>
<div class="t c " style="left:687px;top:95.62px;transform:scaleX(0.970);">200.00</div>
<div class="t c " style="left:727.8px;top:95.62px;transform:scaleX(0.968);">50.00</div>
<div class="" style="left:651.8px;top:107.2px;width:28.8px;height:11.05px;background:#000000;"></div>
<div class="t " style="left:681px;top:106.7px;transform:scaleX(0.942);">Резка</div>
<div class="" style="left:754.2px;top:108.4px;width:9.2px;height:8.85px;background:#fff;border:1px solid #2020ff;"><svg width="9.2" height="8.8" viewBox="0 0 9.2 8.8" style="left:-1px;top:-1px"><path d="M2 3.2h5.2L4.6 6.4z" fill="#2020ff"/></svg></div>
<div class="t c " style="left:687px;top:106.7px;transform:scaleX(0.924);">10.00</div>
<div class="t c " style="left:727.8px;top:106.7px;transform:scaleX(0.999);">65.0</div>
<div class="" style="left:681px;top:118.6px;width:9px;height:0.8px;background:#4080ff;"></div>
<div class="" style="left:650px;top:166px;width:192px;height:12.4px;background:#eceae5;"></div>
<div class="btn" style="left:650px;top:166px;width:12.2px;height:12.4px;"><svg width="4" height="7" viewBox="0 0 4 7" style="position:static"><path d="M4 0v7L0 3.5z" fill="#000"/></svg></div>
<div class="btn" style="left:662.2px;top:166px;width:117.4px;height:12.4px;"></div>
<div class="btn" style="left:830px;top:166px;width:12px;height:12.4px;"><svg width="4" height="7" viewBox="0 0 4 7" style="position:static"><path d="M0 0v7L4 3.5z" fill="#000"/></svg></div>
<div class="fr" style="left:648px;top:181.5px;width:195.5px;height:31.5px;"></div>
<div class="fr" style="left:648px;top:213px;width:195.5px;height:103.5px;"></div>
<div class="fr" style="left:648px;top:316.5px;width:195.5px;height:31px;"></div>
<div class="fr" style="left:648px;top:347.5px;width:195.5px;height:30.5px;"></div>
<div class="fr" style="left:648px;top:378px;width:195.5px;height:31px;"></div>
<div class="fr" style="left:648px;top:409px;width:195.5px;height:36.8px;"></div>
<div class="btn " style="left:654.8px;top:187px;width:34.6px;height:22.2px;"><span class="s" style="transform:scaleX(0.984);">Вверх</span></div>
<div class="btn " style="left:701.8px;top:187px;width:34.5px;height:22.2px;"><span class="s" style="transform:scaleX(0.919);">Вниз</span></div>
<div class="btn " style="left:747.5px;top:187px;width:34.5px;height:22.2px;"><span class="s" style="transform:scaleX(0.877);">Все</span></div>
<div class="btn " style="left:791.2px;top:187px;width:46.9px;height:22.2px;"><span class="s" style="transform:scaleX(0.958);">Расчёт</span></div>
<div class="btn " style="left:709.2px;top:217px;width:32.1px;height:22.2px;"><span class="s" style="transform:scaleX(0.950);">Y+</span></div>
<div class="btn " style="left:672.1px;top:242.2px;width:32.1px;height:22.6px;"><span class="s" style="transform:scaleX(0.950);">X-</span></div>
<div class="btn " style="left:709.2px;top:242.2px;width:32.1px;height:22.6px;"><span class="s" style="transform:scaleX(0.950);">ДОМ</span></div>
<div class="btn " style="left:744.2px;top:242.2px;width:32.4px;height:22.6px;"><span class="s" style="transform:scaleX(0.950);">X+</span></div>
<div class="btn " style="left:709.2px;top:269.2px;width:32.1px;height:22.3px;"><span class="s" style="transform:scaleX(0.950);">Y-</span></div>
<div class="btn " style="left:794.9px;top:217px;width:37.1px;height:22.2px;"><span class="s" style="transform:scaleX(0.950);">Z+</span></div>
<div class="btn " style="left:792.4px;top:242.2px;width:41.6px;height:22.6px;"><span class="s" style="transform:scaleX(0.950);">Z-&gt;ДОМ</span></div>
<div class="btn " style="left:794.9px;top:269.2px;width:37.1px;height:22.3px;"><span class="s" style="transform:scaleX(0.950);">Z-</span></div>
<div class="cb dis" style="left:658px;top:300.6px;width:10px;height:10px;"></div>
<div class="t g" style="left:672px;top:300px;transform:scaleX(0.933);">Медленно</div>
<div class="cb dis" style="left:719.5px;top:300.8px;width:9.5px;height:9.8px;"></div>
<div class="t g" style="left:733px;top:300px;transform:scaleX(0.968);">Шаг</div>
<div class="t r g" style="right:50px;top:299.6px;transform:scaleX(0.971);">Длина:</div>
<div class="ed dis" style="left:801.8px;top:297.6px;width:32.2px;height:14.9px;padding-left:5px;"><span class="s" style="transform:scaleX(0.968);">50.00</span></div>
<div class="btn " style="left:653px;top:321.6px;width:60.6px;height:22px;"><span class="s" style="transform:scaleX(0.966);">Лазер</span></div>
<div class="t r g" style="right:68.5px;top:326.3px;transform:scaleX(0.972);">Мощность:</div>
<div class="ed dis" style="left:789.5px;top:324.8px;width:44.5px;height:15.4px;padding-left:5px;"><span class="s" style="transform:scaleX(0.977);">45.00</span></div>
<div class="t r " style="right:152.5px;top:356.8px;transform:scaleX(1.017);">Кол-во:</div>
<div class="ed dis" style="left:701px;top:355.2px;width:36.6px;height:15.4px;padding-left:6px;"><span class="s" style="transform:scaleX(0.950);">1</span></div>
<div class="t r " style="right:76.5px;top:356.8px;transform:scaleX(0.971);">Пауза:</div>
<div class="ed " style="left:778.3px;top:355.2px;width:37.7px;height:15.4px;padding-left:5px;"><span class="s" style="transform:scaleX(0.950);">0</span></div>
<div class="btn " style="left:821.1px;top:353.3px;width:18.5px;height:17.3px;"><span class="s" style="transform:scaleX(0.950);">...</span></div>
<div class="btn " style="left:652.8px;top:383.4px;width:60.8px;height:21.2px;"><span class="s" style="transform:scaleX(0.953);">Обвод рамки</span></div>
<div class="btn " style="left:717.1px;top:383.4px;width:58px;height:21.2px;"><span class="s" style="transform:scaleX(0.936);">Рез рамки</span></div>
<div class="cb" style="left:778.3px;top:389px;width:9.9px;height:10px;"><svg width="9.9" height="10" viewBox="0 0 10 10" style="left:0;top:0"><path d="M2.4 4.8l1.8 2 3.4-3.8" stroke="#000" stroke-width="1.6" fill="none"/></svg></div>
<div class="t c " style="left:713.3px;top:383px;transform:scaleX(1.012);">Старт от</div>
<div class="t c " style="left:713.3px;top:393px;transform:scaleX(0.983);">головы</div>
<div class="btn " style="left:652.8px;top:414.3px;width:60.8px;height:26.5px;font-size:9.4px;"><span class="s" style="transform:scaleX(0.899);">С Т А Р Т</span></div>
<div class="btn " style="left:717.1px;top:414.3px;width:58px;height:26.5px;"><span class="s" style="transform:scaleX(0.960);">Пауза</span></div>
<div class="btn " style="left:777.8px;top:414.3px;width:61.1px;height:26.5px;font-size:9.4px;"><span class="s" style="transform:scaleX(0.925);">С Т О П</span></div>
<div class="t r g" style="right:149.3px;top:455px;transform:scaleX(0.971);">Станок:</div>
<div class="ed cmb dis" style="left:704.2px;top:453.6px;width:65.1px;height:15.6px;"><div class="cbtn" style="right:1.5px;top:1.5px;bottom:1.5px;width:11.5px"><svg width="7" height="4" viewBox="0 0 7 4"><path d="M0.3 0h6.4L3.5 3.6z" fill="#808080"/></svg></div></div>
<div class="btn " style="left:777.8px;top:451.1px;width:59.1px;height:21.3px;"><span class="s" style="transform:scaleX(0.986);">Загрузить</span></div>
<div class="" style="left:644px;top:58px;width:2px;height:477px;background:#f2f1ee;"></div>
<div class="" style="left:648px;top:180px;width:1px;height:354px;background:#8c8c8c;"></div>
<div class="" style="left:649px;top:446px;width:1px;height:88px;background:#f4f3f0;"></div>
<div class="" style="left:3px;top:534.5px;width:844px;height:1px;background:#f4f3f0;"></div>
<div class="" style="left:3px;top:558px;width:844px;height:1px;background:#808080;"></div>
<div class="" style="left:3px;top:559px;width:844px;height:1px;background:#fff;"></div>
<div class="sw" style="left:11.0px;background:#000000"></div>
<div class="sw" style="left:29.1px;background:#0000ff"></div>
<div class="sw" style="left:47.2px;background:#ff0000"></div>
<div class="sw" style="left:65.3px;background:#00ff00"></div>
<div class="sw" style="left:83.4px;background:#ff80c0"></div>
<div class="sw" style="left:101.5px;background:#ffff00"></div>
<div class="sw" style="left:119.6px;background:#00ffff"></div>
<div class="sw" style="left:137.7px;background:#996633"></div>
<div class="sw" style="left:155.8px;background:#008000"></div>
<div class="sw" style="left:173.9px;background:#8080c0"></div>
<div class="sw" style="left:192.0px;background:#800080"></div>
<div class="sw" style="left:210.1px;background:#0080c0"></div>
<div class="sw" style="left:228.2px;background:#ff8000"></div>
<div class="sw" style="left:246.3px;background:#99d9ff"></div>
<div class="sw" style="left:264.4px;background:#808080"></div>
<div class="sw" style="left:282.5px;background:#000080"></div>
<div class="sw" style="left:300.6px;background:#808000"></div>
<div class="sw" style="left:318.7px;background:#ff0080"></div>
<div class="sw" style="left:336.8px;background:#008080"></div>
<div class="sw" style="left:354.9px;background:#80ff20"></div>
<div class="sw" style="left:373.0px;background:#cccc33"></div>
<div class="sw" style="left:391.1px;background:#990099"></div>
<div class="sw" style="left:409.2px;background:#cc99ff"></div>
<div class="sw" style="left:427.3px;background:#9999ff"></div>
<div class="sw" style="left:445.4px;background:#400040"></div>
<div class="sw" style="left:463.5px;background:#408080"></div>
<div class="sw" style="left:481.6px;background:#400090"></div>
<div class="sw" style="left:499.7px;background:#400040"></div>
<div class="sw" style="left:517.8px;background:#282828"></div>
<div class="sw" style="left:535.9px;background:#333333"></div>
<div class="sw" style="left:554.0px;background:#444444"></div>
<div class="sw" style="left:572.1px;background:#505050"></div>
<div class="sw" style="left:590.2px;background:#606060"></div>
<div class="sw" style="left:608.3px;background:#6a6a6a"></div>
<div class="sw" style="left:626.4px;background:#787878"></div>
<div class="sw" style="left:644.5px;background:#848484"></div>
<div class="sw" style="left:662.6px;background:#909090"></div>
<div class="sw" style="left:680.7px;background:#9a9a9a"></div>
<div class="sw" style="left:698.8px;background:#a8a8a8"></div>
<div class="sw" style="left:716.9px;background:#b4b4b4"></div>
<div class="" style="left:737px;top:537px;width:1px;height:20px;background:#808080;"></div>
<div class="" style="left:738px;top:537px;width:1px;height:20px;background:#fff;"></div>
<div class="t " style="left:4px;top:562px;transform:scaleX(0.961);">Ready</div>
<div class="" style="left:292px;top:561px;width:161px;height:12.5px;box-shadow:inset 1px 1px 0 #808080,inset -1px -1px 0 #fff;"></div>
<div class="t " style="left:293.5px;top:561.8px;transform:scaleX(0.979);">X=191.13 Y=897.55 selected=1</div>
<div class="" style="left:455px;top:561px;width:242px;height:12.5px;box-shadow:inset 1px 1px 0 #808080,inset -1px -1px 0 #fff;"></div>
<div class="t " style="left:456.5px;top:561.8px;transform:scaleX(0.967);">Рабочее время:00:00:00[finished:0 раз]</div>
<div class="" style="left:699px;top:561px;width:148px;height:12.5px;box-shadow:inset 1px 1px 0 #808080,inset -1px -1px 0 #fff;"></div>
<div class="t " style="left:700.5px;top:561.8px;transform:scaleX(0.938);">MedvedMaket</div>
<svg style="left:836px;top:563px" width="10" height="10" viewBox="0 0 10 10"><path d="M10 1L1 10M10 4.5L4.5 10M10 8L8 10" stroke="#808080" stroke-width="1.2" fill="none"/><path d="M10 0L0 10M10 3.5L3.5 10M10 7L7 10" stroke="#fff" stroke-width="0.8" fill="none"/></svg>
<div class="" style="left:86px;top:90px;width:483px;height:292px;background:#d4d0c8;box-shadow:inset 1px 1px 0 #d4d0c8,inset -1px -1px 0 #404040,inset 2px 2px 0 #fff,inset -2px -2px 0 #808080;"></div>
<div class="" style="left:88px;top:92px;width:479px;height:14px;background:linear-gradient(90deg,#0a246a 0%,#a6caf0 100%);"></div>
<div class="t  b" style="left:89.8px;top:93.2px;transform:scaleX(0.999);color:#fff;">Основные настройки системы</div>
<div class="btn " style="left:552px;top:94px;width:13px;height:11px;"><svg width="7" height="6" viewBox="0 0 7 6" style="position:static"><path d="M0.5 0l6 6M6.5 0l-6 6" stroke="#000" stroke-width="1.5" fill="none"/></svg></div>
<div class="fr" style="left:90px;top:114px;width:129px;height:232px;"></div>
<div class="ed" style="left:95px;top:120px;width:120px;height:221px;padding:0;"></div>
<div class="fr" style="left:222px;top:114px;width:164px;height:109px;"></div>
<div class="fr" style="left:387px;top:114px;width:177px;height:109px;"></div>
<div class="fr" style="left:222px;top:224px;width:342px;height:122px;"></div>
<div class="fr" style="left:222px;top:231px;width:246px;height:52px;"></div>
<div class="" style="left:104px;top:131px;width:1px;height:44.32px;background-image:repeating-linear-gradient(180deg,#a0a0a0 0,#a0a0a0 0.83px,transparent 0.83px,transparent 1.66px);"></div>
<div class="" style="left:119.2px;top:133px;width:1px;height:32.74px;background-image:repeating-linear-gradient(180deg,#a0a0a0 0,#a0a0a0 0.83px,transparent 0.83px,transparent 1.66px);"></div>
<div class="" style="left:119.2px;top:183.3px;width:1px;height:45.32px;background-image:repeating-linear-gradient(180deg,#a0a0a0 0,#a0a0a0 0.83px,transparent 0.83px,transparent 1.66px);"></div>
<div class="" style="left:107.5px;top:127.5px;width:3.5px;height:1px;background-image:repeating-linear-gradient(90deg,#a0a0a0 0,#a0a0a0 0.83px,transparent 0.83px,transparent 1.66px);"></div>
<svg style="left:101px;top:124.4px" width="7" height="7" viewBox="0 0 7 7"><rect x="0.5" y="0.5" width="6" height="6" fill="#fff" stroke="#909090" stroke-width="0.9"/><path d="M2 3.5h3" stroke="#000" stroke-width="1"/></svg>
<div class="t " style="left:112.6px;top:122.1px;transform:scaleX(0.921);">Опции машины</div>
<div class="" style="left:120px;top:140.1px;width:6px;height:1px;background-image:repeating-linear-gradient(90deg,#a0a0a0 0,#a0a0a0 0.83px,transparent 0.83px,transparent 1.66px);"></div>
<div class="" style="left:126.6px;top:134.4px;width:51.8px;height:12.4px;background:#0a246a;"></div>
<div class="t " style="left:128px;top:134.7px;transform:scaleX(0.960);color:#fff;">Контроллер</div>
<div class="" style="left:120px;top:152.7px;width:6px;height:1px;background-image:repeating-linear-gradient(90deg,#a0a0a0 0,#a0a0a0 0.83px,transparent 0.83px,transparent 1.66px);"></div>
<div class="t " style="left:128px;top:147.3px;transform:scaleX(0.938);">Рабочий стол</div>
<div class="" style="left:120px;top:165.2px;width:6px;height:1px;background-image:repeating-linear-gradient(90deg,#a0a0a0 0,#a0a0a0 0.83px,transparent 0.83px,transparent 1.66px);"></div>
<div class="t " style="left:128px;top:159.8px;transform:scaleX(0.957);">Подача</div>
<div class="" style="left:107.5px;top:177.8px;width:3.5px;height:1px;background-image:repeating-linear-gradient(90deg,#a0a0a0 0,#a0a0a0 0.83px,transparent 0.83px,transparent 1.66px);"></div>
<svg style="left:101px;top:174.7px" width="7" height="7" viewBox="0 0 7 7"><rect x="0.5" y="0.5" width="6" height="6" fill="#fff" stroke="#909090" stroke-width="0.9"/><path d="M2 3.5h3" stroke="#000" stroke-width="1"/></svg>
<div class="t " style="left:112.6px;top:172.4px;transform:scaleX(0.946);">Режим работы</div>
<div class="" style="left:120px;top:190.4px;width:6px;height:1px;background-image:repeating-linear-gradient(90deg,#a0a0a0 0,#a0a0a0 0.83px,transparent 0.83px,transparent 1.66px);"></div>
<div class="t " style="left:128px;top:185px;transform:scaleX(0.942);">Резка</div>
<div class="" style="left:120px;top:203px;width:6px;height:1px;background-image:repeating-linear-gradient(90deg,#a0a0a0 0,#a0a0a0 0.83px,transparent 0.83px,transparent 1.66px);"></div>
<div class="t " style="left:128px;top:197.6px;transform:scaleX(0.956);">Гравировка</div>
<div class="" style="left:120px;top:215.6px;width:6px;height:1px;background-image:repeating-linear-gradient(90deg,#a0a0a0 0,#a0a0a0 0.83px,transparent 0.83px,transparent 1.66px);"></div>
<div class="t " style="left:128px;top:210.2px;transform:scaleX(0.981);">Грав-ка градиентом</div>
<div class="" style="left:120px;top:228.1px;width:6px;height:1px;background-image:repeating-linear-gradient(90deg,#a0a0a0 0,#a0a0a0 0.83px,transparent 0.83px,transparent 1.66px);"></div>
<div class="t " style="left:128px;top:222.7px;transform:scaleX(0.908);">Перфорация</div>
<div class="t r " style="right:553.2px;top:126.8px;transform:scaleX(0.978);">Контроллер:</div>
<div class="ed cmb " style="left:302.2px;top:124.2px;width:76.2px;height:15.8px;"><span class="s" style="transform:scaleX(0.918);">Mpc6535</span><div class="cbtn" style="right:1.5px;top:1.5px;bottom:1.5px;width:11.5px"><svg width="7" height="4" viewBox="0 0 7 4"><path d="M0.3 0h6.4L3.5 3.6z" fill="#000"/></svg></div></div>
<div class="t r " style="right:380.5px;top:125.5px;transform:scaleX(0.995);">IO-уровень:</div>
<div class="ed cmb " style="left:472.2px;top:122.4px;width:85.8px;height:15.8px;"><span class="s" style="transform:scaleX(0.976);">Низкий уровень</span><div class="cbtn" style="right:1.5px;top:1.5px;bottom:1.5px;width:11.5px"><svg width="7" height="4" viewBox="0 0 7 4"><path d="M0.3 0h6.4L3.5 3.6z" fill="#000"/></svg></div></div>
<div class="t r " style="right:380.5px;top:151.5px;transform:scaleX(0.993);">Тип концевика:</div>
<div class="ed cmb " style="left:472.2px;top:148.4px;width:85.8px;height:15.8px;"><span class="s" style="transform:scaleX(0.976);">Низкий уровень</span><div class="cbtn" style="right:1.5px;top:1.5px;bottom:1.5px;width:11.5px"><svg width="7" height="4" viewBox="0 0 7 4"><path d="M0.3 0h6.4L3.5 3.6z" fill="#000"/></svg></div></div>
<div class="t r " style="right:380.5px;top:176.4px;transform:scaleX(0.968);">Модель Лазера:</div>
<div class="ed cmb " style="left:472.2px;top:173.3px;width:85.8px;height:15.8px;"><span class="s" style="transform:scaleX(0.968);">Аналог-сигнал</span><div class="cbtn" style="right:1.5px;top:1.5px;bottom:1.5px;width:11.5px"><svg width="7" height="4" viewBox="0 0 7 4"><path d="M0.3 0h6.4L3.5 3.6z" fill="#000"/></svg></div></div>
<div class="t r " style="right:380.5px;top:200px;transform:scaleX(0.975);">Макс. мощь (%):</div>
<div class="ed " style="left:472.2px;top:198px;width:85.8px;height:15px;padding-left:6px;"><span class="s" style="transform:scaleX(0.932);">100</span></div>
<div class="t r " style="right:543.5px;top:242.3px;transform:scaleX(0.938);">№ Машины:</div>
<div class="ed " style="left:311.8px;top:241px;width:67.4px;height:14.2px;padding-left:5px;"><span class="s" style="transform:scaleX(0.950);">1</span></div>
<div class="t r " style="right:543.5px;top:264.3px;transform:scaleX(0.965);">Код Машины:</div>
<div class="ed cmb " style="left:311.8px;top:261.2px;width:67.4px;height:15.8px;"><span class="s" style="transform:scaleX(0.960);">1-0000005f</span><div class="cbtn" style="right:1.5px;top:1.5px;bottom:1.5px;width:11.5px"><svg width="7" height="4" viewBox="0 0 7 4"><path d="M0.3 0h6.4L3.5 3.6z" fill="#000"/></svg></div></div>
<div class="btn " style="left:386.8px;top:238.5px;width:76.2px;height:18.2px;"><span class="s" style="transform:scaleX(1.034);">Unite Config</span></div>
<div class="btn " style="left:386.8px;top:261.1px;width:76.2px;height:17.7px;"><span class="s" style="transform:scaleX(1.006);">Взять КодКарты</span></div>
<div class="btn " style="left:475.9px;top:232.5px;width:84.9px;height:18.2px;"><span class="s" style="transform:scaleX(0.968);">Сохранить конфиг</span></div>
<div class="btn " style="left:475.9px;top:255px;width:84.9px;height:18.2px;"><span class="s" style="transform:scaleX(0.985);">Читать конфиг</span></div>
<div class="btn " style="left:475.9px;top:278.6px;width:84.9px;height:18.2px;"><span class="s" style="transform:scaleX(0.947);">Сервопривод</span></div>
<div class="cb" style="left:238.6px;top:293.4px;width:9.6px;height:9.8px;"></div>
<div class="t " style="left:251.8px;top:293px;transform:scaleX(0.987);">Поддержка двух лазеров</div>
<div class="t " style="left:240.3px;top:312.9px;transform:scaleX(0.944);">Расстояние между головками (мм):</div>
<div class="ed " style="left:389.7px;top:311px;width:55.8px;height:15px;padding-left:5px;"><span class="s" style="transform:scaleX(0.950);">0.10</span></div>
<div class="btn " style="left:240.7px;top:355.1px;width:65.2px;height:20.7px;"><span class="s" style="transform:scaleX(0.973);">Сохранить</span></div>
<div class="btn " style="left:347.6px;top:355.1px;width:65.7px;height:20.7px;"><span class="s" style="transform:scaleX(1.010);">Закрыть</span></div>
</div>
</body></html>
